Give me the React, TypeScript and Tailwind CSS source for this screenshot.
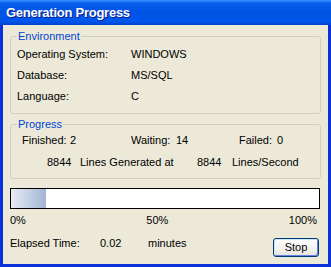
const env = [
  { label: "Operating System:", value: "WINDOWS" },
  { label: "Database:", value: "MS/SQL" },
  { label: "Language:", value: "C" },
];

export default function App() {
  return (
    <div className="flex h-[267px] w-[331px] flex-col bg-[#0831D9] font-['Liberation_Sans',Arial,sans-serif]">
      {/* title bar */}
      <div className="flex h-[25px] shrink-0 items-center bg-[linear-gradient(to_bottom,#3D95FF_0%,#0A5FEF_12%,#0054E3_45%,#0056EC_85%,#0043CC_100%)] pl-[6px]">
        <span className="text-[13px] font-bold leading-none tracking-[-0.25px] text-white [text-shadow:1px_1px_0_#0A1A8A]">
          Generation Progress
        </span>
      </div>

      <div className="mx-[3px] mb-[3px] flex flex-1 flex-col bg-[#ECE9D8] px-[7px] pt-[5px] text-[11px] text-black">
        <fieldset className="rounded-[3px] border border-[#D0D0BF] pb-[6px] pl-[6px] pt-[2px]">
          <legend className="px-[1px] leading-[12px] text-[#0046D5]">Environment</legend>
          {env.map((r) => (
            <div key={r.label} className="flex h-[21px] leading-[21px]">
              <span className="w-[114px]">{r.label}</span>
              <span>{r.value}</span>
            </div>
          ))}
        </fieldset>

        <fieldset className="mt-[4px] rounded-[3px] border border-[#D0D0BF] pb-[5px] pl-[6px]">
          <legend className="px-[1px] leading-[12px] text-[#0046D5]">Progress</legend>
          <div className="flex h-[22px] pl-[5px] leading-[21px]">
            <div className="flex w-[109px]">
              <span className="w-[48px]">Finished:</span>
              <span>2</span>
            </div>
            <div className="flex w-[108px]">
              <span className="w-[45px]">Waiting:</span>
              <span>14</span>
            </div>
            <div className="flex">
              <span className="w-[38px]">Failed:</span>
              <span>0</span>
            </div>
          </div>
          <div className="flex h-[21px] pl-[30px] leading-[21px]">
            <span className="w-[33px]">8844</span>
            <span className="w-[117px]">Lines Generated at</span>
            <span className="w-[35px]">8844</span>
            <span>Lines/Second</span>
          </div>
        </fieldset>

        {/* progress bar */}
        <div className="mt-[9px] h-[21px] w-[310px] border border-black bg-white">
          <div className="h-full w-[35px] bg-[linear-gradient(to_right,#E8ECF4,#A2B5D5)]" />
        </div>
        <div className="mt-[5px] flex h-[13px] w-[307px] justify-between leading-[13px]">
          <span>0%</span>
          <span>50%</span>
          <span>100%</span>
        </div>

        <div className="mt-[10px] flex items-start pr-[2px]">
          <span className="w-[90px] leading-[13px]">Elapsed Time:</span>
          <span className="w-[48px] leading-[13px]">0.02</span>
          <span className="leading-[13px]">minutes</span>
          <button className="ml-auto mt-[1px] flex h-[19px] w-[46px] items-center justify-center rounded-[3px] border border-[#003C74] bg-[linear-gradient(to_bottom,#FFFFFF,#F0EFEA_70%,#E3E1D8)] leading-none shadow-[inset_1px_1px_0_#CEE7FF,inset_-1px_-1px_0_#6982EE]">
            Stop
          </button>
        </div>
      </div>
    </div>
  );
}
